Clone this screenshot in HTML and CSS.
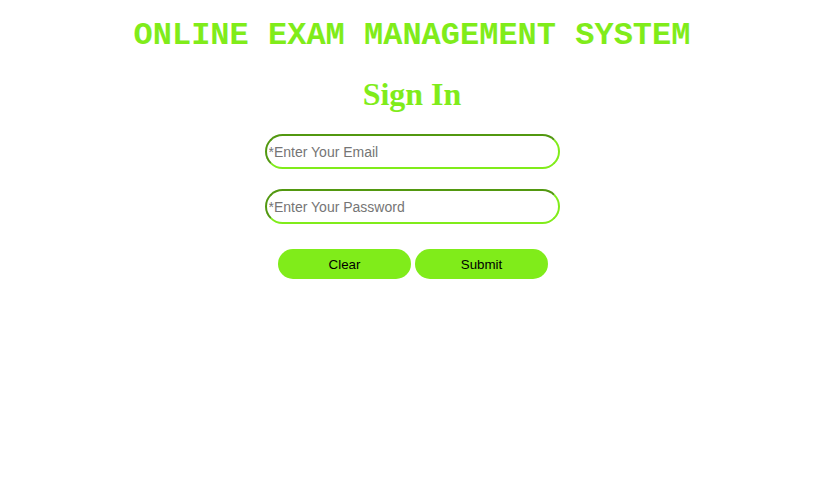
FILE: index.html
```html
<!DOCTYPE html>
<html lang="en">
<head>
<meta charset="utf-8">
<title>Online Exam Management System</title>
<link rel="stylesheet" href="styles.css">
</head>
<body>
  <h1 class="title">ONLINE EXAM MANAGEMENT SYSTEM</h1>
  <h2 class="heading">Sign In</h2>
  <form class="form">
    <input class="field" type="email" placeholder="*Enter Your Email">
    <input class="field" type="password" placeholder="*Enter Your Password">
    <div class="actions">
      <button class="btn" type="reset">Clear</button>
      <button class="btn" type="submit">Submit</button>
    </div>
  </form>
</body>
</html>
```

FILE: styles.css
```css
html, body {
  margin: 0;
  padding: 0;
  background: #ffffff;
}

body {
  font-family: "Liberation Sans", Arial, sans-serif;
  display: flex;
  flex-direction: column;
  align-items: center;
}

.title {
  margin: 18px 0 0;
  font-family: "Liberation Mono", "Courier New", monospace;
  font-size: 32px;
  font-weight: bold;
  line-height: 36px;
  color: #80ec1a;
  text-align: center;
}

.heading {
  margin: 22px 0 0;
  font-family: "Liberation Serif", "Times New Roman", serif;
  font-size: 32px;
  font-weight: bold;
  line-height: 37px;
  color: #80ec1a;
  text-align: center;
}

.form {
  margin-top: 21px;
  display: flex;
  flex-direction: column;
  align-items: center;
  gap: 20px;
}

.field {
  box-sizing: border-box;
  width: 295px;
  height: 35px;
  border: 2px inset #80ec1a;
  border-radius: 18px;
  padding: 1px 2px 0 2px;
  font-family: "Liberation Sans", Arial, sans-serif;
  font-size: 14px;
  color: #000;
  background: #fff;
  outline: none;
}

.field::placeholder {
  color: #757575;
}

.actions {
  margin-top: 5px;
  padding-left: 2px;
  display: flex;
  gap: 4px;
}

.btn {
  width: 133px;
  height: 30px;
  border: none;
  border-radius: 15px;
  background: #80ec1a;
  color: #000;
  font-family: "Liberation Sans", Arial, sans-serif;
  font-size: 13.33px;
  padding: 0;
  cursor: pointer;
}
```
